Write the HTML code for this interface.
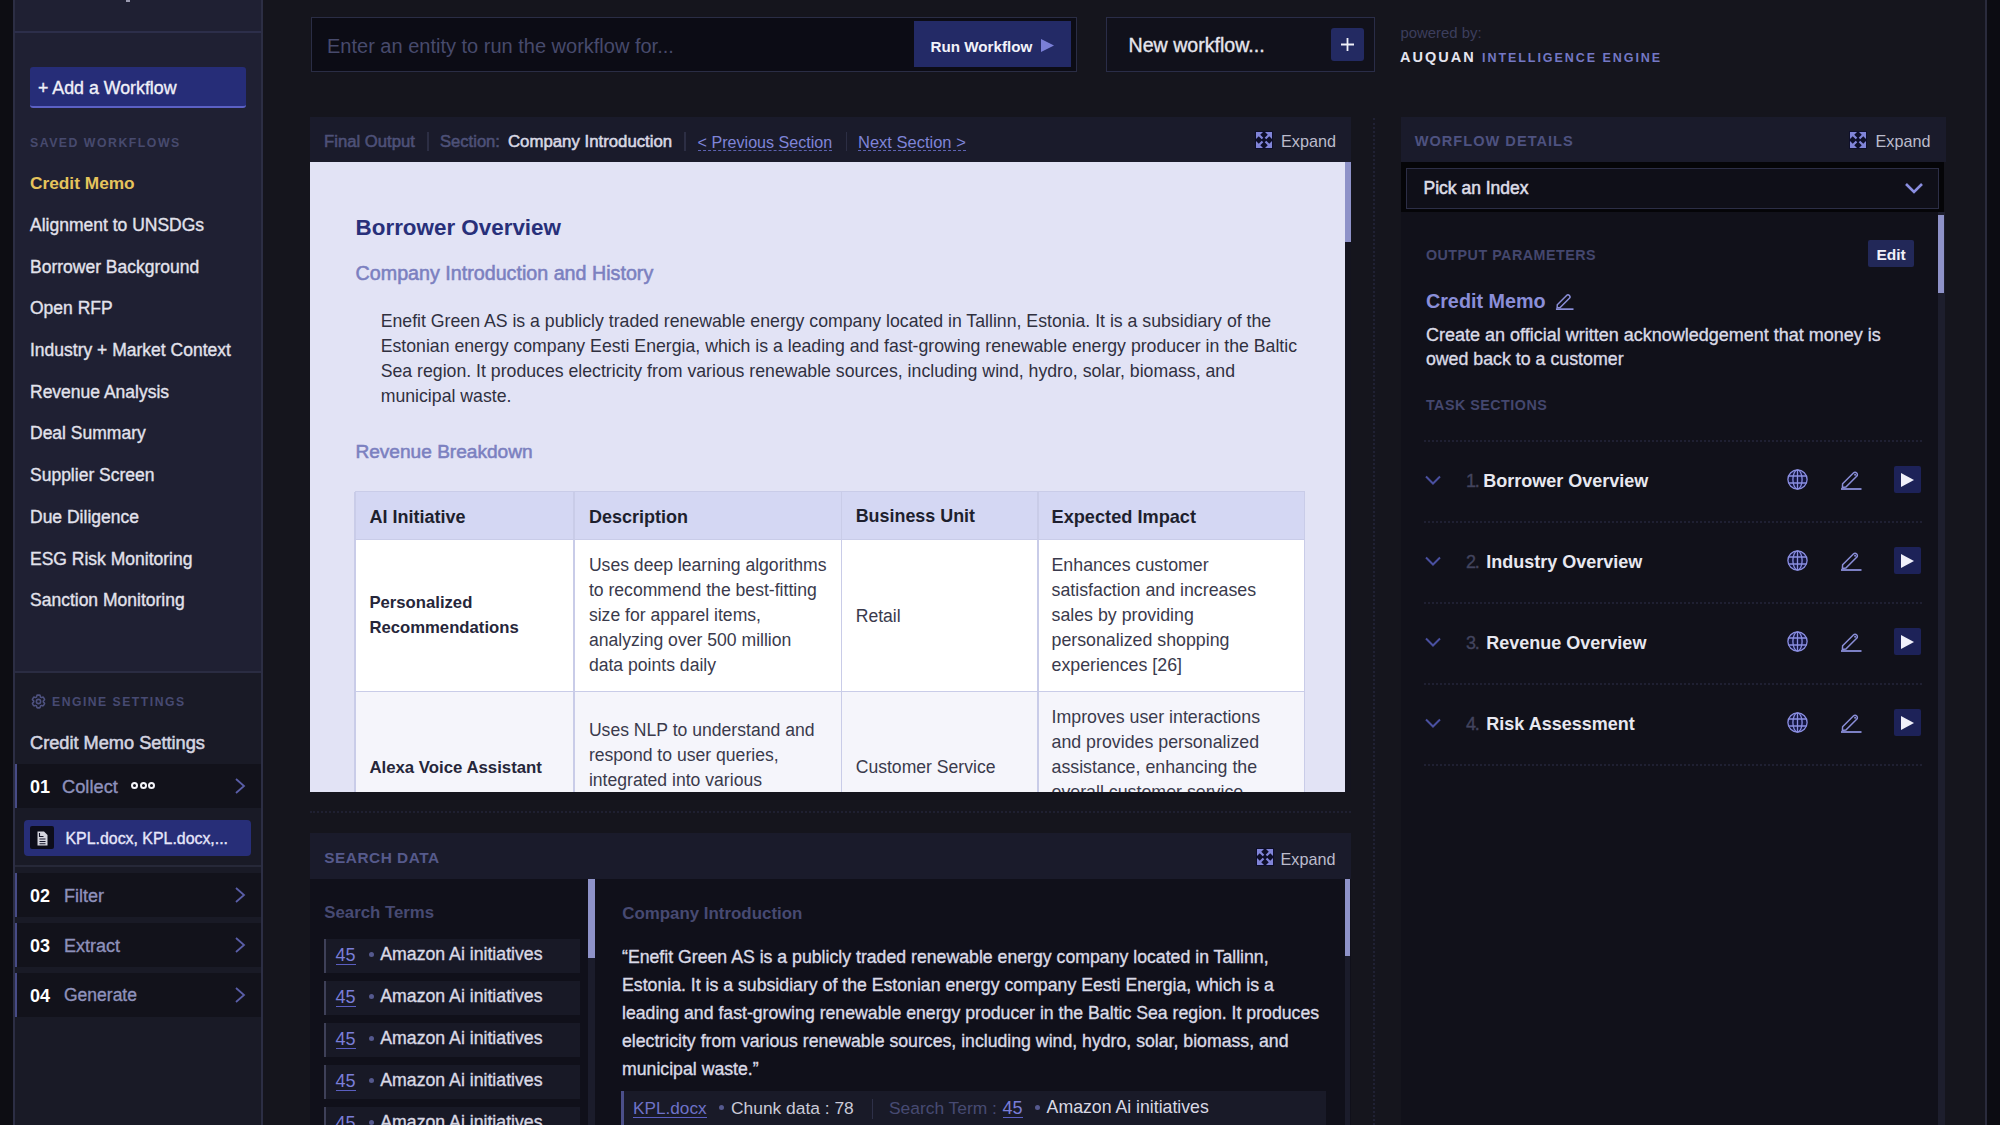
<!DOCTYPE html>
<html><head><meta charset="utf-8"><title>Auquan Workflow</title>
<style>
html,body{margin:0;padding:0;}
body{width:2000px;height:1125px;overflow:hidden;background:#15151d;font-family:"Liberation Sans",sans-serif;position:relative;}
.t{position:absolute;white-space:nowrap;}
.m{-webkit-text-stroke:0.35px currentColor;}
.m2{-webkit-text-stroke:0.55px currentColor;}
.r{position:absolute;}
svg.r{display:block;}
</style></head><body>
<div id="sidebar">
<div class="r" style="left:0px;top:0px;width:13px;height:1125px;background:#0d0d13;"></div>
<div class="r" style="left:13px;top:0px;width:250px;height:1125px;background:#1f2033;"></div>
<div class="r" style="left:13px;top:0px;width:1.5px;height:1125px;background:#2c2e44;"></div>
<div class="r" style="left:261px;top:0px;width:2px;height:1125px;background:#2c2e44;"></div>
<div class="r" style="left:14px;top:31px;width:247px;height:2px;background:#2c2e4a;"></div>
<div class="r" style="left:126px;top:0px;width:4px;height:1.5px;background:#9a9ab0;"></div>
<div class="r" style="left:30px;top:67px;width:216px;height:41px;background:#262d78;border-radius:3px;border-bottom:2px solid #5b60c4;box-sizing:border-box;"></div>
<div class="t m" style="left:38px;top:79.73px;font-size:17.8px;color:#f0f0f8;font-weight:400;letter-spacing:0px;line-height:1;">+ Add a Workflow</div>
<div class="t" style="left:30px;top:136.89px;font-size:12.3px;color:#474a6e;font-weight:700;letter-spacing:1.5px;line-height:1;">SAVED WORKFLOWS</div>
<div class="t" style="left:30px;top:175.16px;font-size:17.3px;color:#e6c45c;font-weight:700;letter-spacing:0px;line-height:1;">Credit Memo</div>
<div class="t m" style="left:30px;top:216.99px;font-size:17.5px;color:#e2e2ec;font-weight:400;letter-spacing:0px;line-height:1;">Alignment to UNSDGs</div>
<div class="t m" style="left:30px;top:258.69px;font-size:17.5px;color:#e2e2ec;font-weight:400;letter-spacing:0px;line-height:1;">Borrower Background</div>
<div class="t m" style="left:30px;top:300.39px;font-size:17.5px;color:#e2e2ec;font-weight:400;letter-spacing:0px;line-height:1;">Open RFP</div>
<div class="t m" style="left:30px;top:342.09px;font-size:17.5px;color:#e2e2ec;font-weight:400;letter-spacing:0px;line-height:1;">Industry + Market Context</div>
<div class="t m" style="left:30px;top:383.79px;font-size:17.5px;color:#e2e2ec;font-weight:400;letter-spacing:0px;line-height:1;">Revenue Analysis</div>
<div class="t m" style="left:30px;top:425.49px;font-size:17.5px;color:#e2e2ec;font-weight:400;letter-spacing:0px;line-height:1;">Deal Summary</div>
<div class="t m" style="left:30px;top:467.19px;font-size:17.5px;color:#e2e2ec;font-weight:400;letter-spacing:0px;line-height:1;">Supplier Screen</div>
<div class="t m" style="left:30px;top:508.89px;font-size:17.5px;color:#e2e2ec;font-weight:400;letter-spacing:0px;line-height:1;">Due Diligence</div>
<div class="t m" style="left:30px;top:550.59px;font-size:17.5px;color:#e2e2ec;font-weight:400;letter-spacing:0px;line-height:1;">ESG Risk Monitoring</div>
<div class="t m" style="left:30px;top:592.29px;font-size:17.5px;color:#e2e2ec;font-weight:400;letter-spacing:0px;line-height:1;">Sanction Monitoring</div>
<div class="r" style="left:14.5px;top:672px;width:246.5px;height:453px;background:#191a26;"></div>
<div class="r" style="left:14.5px;top:671px;width:246.5px;height:2px;background:#2a2c42;"></div>
<svg class="r" style="left:29.5px;top:692.5px" width="17" height="17" viewBox="0 0 24 24" fill="none" stroke="#4e5280" stroke-width="2.2"><path d="M9.594 3.94c.09-.542.56-.94 1.11-.94h2.593c.55 0 1.02.398 1.11.94l.213 1.281c.063.374.313.686.645.87.074.04.147.083.22.127.325.196.72.257 1.075.124l1.217-.456a1.125 1.125 0 0 1 1.37.49l1.296 2.247a1.125 1.125 0 0 1-.26 1.431l-1.003.827c-.293.241-.438.613-.43.992a7.723 7.723 0 0 1 0 .255c-.008.378.137.75.43.991l1.004.827c.424.35.534.955.26 1.43l-1.298 2.247a1.125 1.125 0 0 1-1.369.491l-1.217-.456c-.355-.133-.75-.072-1.076.124a6.47 6.47 0 0 1-.22.128c-.331.183-.581.495-.644.869l-.213 1.281c-.09.543-.56.94-1.11.94h-2.594c-.55 0-1.019-.398-1.11-.94l-.213-1.281c-.062-.374-.312-.686-.644-.87a6.52 6.52 0 0 1-.22-.127c-.325-.196-.72-.257-1.076-.124l-1.217.456a1.125 1.125 0 0 1-1.369-.49l-1.297-2.247a1.125 1.125 0 0 1 .26-1.431l1.004-.827c.292-.24.437-.613.43-.991a6.932 6.932 0 0 1 0-.255c.007-.38-.138-.751-.43-.992l-1.004-.827a1.125 1.125 0 0 1-.26-1.43l1.297-2.247a1.125 1.125 0 0 1 1.37-.491l1.216.456c.356.133.751.072 1.076-.124.072-.044.146-.086.22-.128.332-.183.582-.495.644-.869l.214-1.28Z"/><circle cx="12" cy="12" r="3"/></svg>
<div class="t" style="left:52px;top:696.47px;font-size:12.2px;color:#474a72;font-weight:700;letter-spacing:1.5px;line-height:1;">ENGINE SETTINGS</div>
<div class="t m2" style="left:30px;top:734.39px;font-size:18.2px;color:#d4d4e0;font-weight:400;letter-spacing:0px;line-height:1;">Credit Memo Settings</div>
<div class="r" style="left:14.5px;top:764px;width:246.5px;height:44px;background:#12121b;"></div>
<div class="r" style="left:14.5px;top:764px;width:2.5px;height:44px;background:#474b86;"></div>
<div class="t" style="left:30px;top:777.86px;font-size:18px;color:#ffffff;font-weight:700;letter-spacing:0px;line-height:1;">01</div>
<div class="t m" style="left:62px;top:777.61px;font-size:18.3px;color:#8e91bc;font-weight:400;letter-spacing:0px;line-height:1;">Collect</div>
<svg class="r" style="left:234px;top:777.0px" width="12" height="18" viewBox="0 0 12 18" fill="none" stroke="#5a5ea8" stroke-width="1.8"><path d="M2 2l8 7-8 7"/></svg>
<div class="r" style="left:131.0px;top:782px;width:7px;height:7px;border:2px solid #f4f4fa;border-radius:50%;box-sizing:border-box"></div>
<div class="r" style="left:139.5px;top:782px;width:7px;height:7px;border:2px solid #f4f4fa;border-radius:50%;box-sizing:border-box"></div>
<div class="r" style="left:148.0px;top:782px;width:7px;height:7px;border:2px solid #f4f4fa;border-radius:50%;box-sizing:border-box"></div>
<div class="r" style="left:24px;top:820px;width:227px;height:36px;background:#272e78;border-radius:4px"></div>
<div class="r" style="left:30px;top:826px;width:24px;height:23px;background:#0d0d1a;border-radius:2px"></div>
<svg class="r" style="left:36.5px;top:831px" width="11" height="15" viewBox="0 0 11 15"><path d="M0.5 0.5h6.5l3.5 3.5v10.5h-10z" fill="#d4d4de"/><path d="M2.5 2v3.5h4M2.5 8h6M2.5 10.5h6M2.5 12.8h6" stroke="#15152a" stroke-width="1.1" fill="none"/></svg>
<div class="t m" style="left:65.5px;top:830.94px;font-size:15.9px;color:#e6e6fa;font-weight:400;letter-spacing:0px;line-height:1;">KPL.docx, KPL.docx,...</div>
<div class="r" style="left:14.5px;top:865px;width:246.5px;height:2px;background:#262838;"></div>
<div class="r" style="left:14.5px;top:873px;width:246.5px;height:44px;background:#12121b;"></div>
<div class="r" style="left:14.5px;top:873px;width:2.5px;height:44px;background:#474b86;"></div>
<div class="t" style="left:30px;top:886.86px;font-size:18px;color:#ffffff;font-weight:700;letter-spacing:0px;line-height:1;">02</div>
<div class="t m" style="left:64px;top:886.86px;font-size:18.0px;color:#8e91bc;font-weight:400;letter-spacing:0px;line-height:1;">Filter</div>
<svg class="r" style="left:234px;top:886.0px" width="12" height="18" viewBox="0 0 12 18" fill="none" stroke="#5a5ea8" stroke-width="1.8"><path d="M2 2l8 7-8 7"/></svg>
<div class="r" style="left:14.5px;top:923px;width:246.5px;height:44px;background:#12121b;"></div>
<div class="r" style="left:14.5px;top:923px;width:2.5px;height:44px;background:#474b86;"></div>
<div class="t" style="left:30px;top:936.86px;font-size:18px;color:#ffffff;font-weight:700;letter-spacing:0px;line-height:1;">03</div>
<div class="t m" style="left:64px;top:936.86px;font-size:18.0px;color:#8e91bc;font-weight:400;letter-spacing:0px;line-height:1;">Extract</div>
<svg class="r" style="left:234px;top:936.0px" width="12" height="18" viewBox="0 0 12 18" fill="none" stroke="#5a5ea8" stroke-width="1.8"><path d="M2 2l8 7-8 7"/></svg>
<div class="r" style="left:14.5px;top:973px;width:246.5px;height:44px;background:#12121b;"></div>
<div class="r" style="left:14.5px;top:973px;width:2.5px;height:44px;background:#474b86;"></div>
<div class="t" style="left:30px;top:986.86px;font-size:18px;color:#ffffff;font-weight:700;letter-spacing:0px;line-height:1;">04</div>
<div class="t m" style="left:64px;top:987.29px;font-size:17.5px;color:#8e91bc;font-weight:400;letter-spacing:0px;line-height:1;">Generate</div>
<svg class="r" style="left:234px;top:986.0px" width="12" height="18" viewBox="0 0 12 18" fill="none" stroke="#5a5ea8" stroke-width="1.8"><path d="M2 2l8 7-8 7"/></svg>
</div>
<div id="main">
<div class="r" style="left:311px;top:17px;width:766px;height:55px;background:#0c0c15;border:1.5px solid #2a2d45;box-sizing:border-box;"></div>
<div class="t" style="left:327px;top:36.27px;font-size:20px;color:#474a6c;font-weight:400;letter-spacing:0px;line-height:1;">Enter an entity to run the workflow for...</div>
<div class="r" style="left:914px;top:21px;width:157px;height:46px;background:#232a66;"></div>
<div class="t" style="left:930.5px;top:38.93px;font-size:15.2px;color:#f2f2fa;font-weight:700;letter-spacing:0px;line-height:1;">Run Workflow</div>
<svg class="r" style="left:1041px;top:39px" width="13" height="13" viewBox="0 0 13 13"><path d="M0 0L13 6.5L0 13z" fill="#7a7fd8"/></svg>
<div class="r" style="left:1106px;top:17px;width:269px;height:55px;background:#11111b;border:1.5px solid #2a2d48;box-sizing:border-box;"></div>
<div class="t m" style="left:1128.5px;top:36.01px;font-size:19.6px;color:#e6e6ee;font-weight:400;letter-spacing:0px;line-height:1;">New workflow...</div>
<div class="r" style="left:1331px;top:28px;width:33px;height:33px;background:#232a62;border-radius:3px"></div>
<svg class="r" style="left:1340px;top:37px" width="15" height="15" viewBox="0 0 15 15" stroke="#f0f0f8" stroke-width="1.8"><path d="M7.5 1v13M1 7.5h13"/></svg>
<div class="t" style="left:1400.5px;top:26.39px;font-size:14.9px;color:#3c3e5c;font-weight:400;letter-spacing:0px;line-height:1;">powered by:</div>
<div class="t" style="left:1400px;top:50.03px;font-size:14.5px;color:#e4e4ee;font-weight:700;letter-spacing:2.0px;line-height:1;">AUQUAN</div>
<div class="t" style="left:1482px;top:51.72px;font-size:12.5px;color:#7478c4;font-weight:700;letter-spacing:1.95px;line-height:1;">INTELLIGENCE ENGINE</div>
<div class="r" style="left:310px;top:117px;width:1041px;height:45px;background:#1a1b2b;"></div>
<div class="t m2" style="left:324px;top:133.66px;font-size:16.7px;color:#4e5178;font-weight:400;letter-spacing:0px;line-height:1;">Final Output</div>
<div class="r" style="left:427px;top:132px;width:1.5px;height:19px;background:#2c2e44;"></div>
<div class="t m2" style="left:440px;top:133.75px;font-size:16.6px;color:#4e5178;font-weight:400;letter-spacing:0px;line-height:1;">Section:</div>
<div class="t m2" style="left:508px;top:133.58px;font-size:16.8px;color:#d8d8e4;font-weight:400;letter-spacing:0px;line-height:1;">Company Introduction</div>
<div class="r" style="left:684px;top:132px;width:1.5px;height:19px;background:#2c2e44;"></div>
<div class="t" style="left:697.6px;top:134.17px;font-size:16.1px;color:#7f84d8;font-weight:400;letter-spacing:0px;line-height:1;border-bottom:1.5px dashed #5d62b0;padding-bottom:0px;">&lt; Previous Section</div>
<div class="r" style="left:845.5px;top:132px;width:1.5px;height:19px;background:#2c2e44;"></div>
<div class="t" style="left:858px;top:133.83px;font-size:16.5px;color:#7f84d8;font-weight:400;letter-spacing:0px;line-height:1;border-bottom:1.5px dashed #5d62b0;">Next Section &gt;</div>
<svg class="r" style="left:1255px;top:131px" width="18" height="18" viewBox="0 0 18 18"><rect width="18" height="18" fill="#0e0f2a"/><g fill="#8084d8"><path d="M1 1h7L1 8z"/><path d="M17 1h-7l7 7z"/><path d="M1 17h7L1 10z"/><path d="M17 17h-7l7-7z"/></g><g stroke="#8084d8" stroke-width="2.2"><path d="M3 3l4.5 4.5M15 3l-4.5 4.5M3 15l4.5-4.5M15 15l-4.5-4.5"/></g></svg>
<div class="t" style="left:1281px;top:133.39px;font-size:16.2px;color:#bcbccc;font-weight:400;letter-spacing:0px;line-height:1;">Expand</div>
<div class="r" style="left:310px;top:162px;width:1035px;height:630px;background:#e2e3f5;"></div>
<div class="r" style="left:0;top:0;width:1351px;height:792px;overflow:hidden">
<div class="r" style="left:1345px;top:162px;width:6px;height:630px;background:#14141f;"></div>
<div class="r" style="left:1345px;top:162px;width:6px;height:80px;background:#8e92c8;"></div>
<div class="t" style="left:355.6px;top:217.44px;font-size:22.4px;color:#28307a;font-weight:700;letter-spacing:0px;line-height:1;">Borrower Overview</div>
<div class="t m2" style="left:355.6px;top:264.12px;font-size:19.7px;color:#7b80c0;font-weight:400;letter-spacing:0px;line-height:1;">Company Introduction and History</div>
<div class="t" style="left:380.7px;top:312.82px;font-size:17.7px;color:#30303f;font-weight:400;letter-spacing:0px;line-height:1;">Enefit Green AS is a publicly traded renewable energy company located in Tallinn, Estonia. It is a subsidiary of the</div>
<div class="t" style="left:380.7px;top:338.02px;font-size:17.7px;color:#30303f;font-weight:400;letter-spacing:0px;line-height:1;">Estonian energy company Eesti Energia, which is a leading and fast-growing renewable energy producer in the Baltic</div>
<div class="t" style="left:380.7px;top:363.22px;font-size:17.7px;color:#30303f;font-weight:400;letter-spacing:0px;line-height:1;">Sea region. It produces electricity from various renewable sources, including wind, hydro, solar, biomass, and</div>
<div class="t" style="left:380.7px;top:388.42px;font-size:17.7px;color:#30303f;font-weight:400;letter-spacing:0px;line-height:1;">municipal waste.</div>
<div class="t m2" style="left:355.4px;top:442.03px;font-size:19.1px;color:#7b80c0;font-weight:400;letter-spacing:0px;line-height:1;">Revenue Breakdown</div>
<div class="r" style="left:355px;top:491.5px;width:950px;height:48px;background:#d4d7f3;"></div>
<div class="r" style="left:355px;top:539.5px;width:950px;height:152px;background:#ffffff;"></div>
<div class="r" style="left:355px;top:691.5px;width:950px;height:101px;background:#f5f5fb;"></div>
<div class="r" style="left:354.25px;top:491.5px;width:1.5px;height:301px;background:#c9cce8;"></div>
<div class="r" style="left:573.25px;top:491.5px;width:1.5px;height:301px;background:#c9cce8;"></div>
<div class="r" style="left:840.75px;top:491.5px;width:1.5px;height:301px;background:#c9cce8;"></div>
<div class="r" style="left:1037.25px;top:491.5px;width:1.5px;height:301px;background:#c9cce8;"></div>
<div class="r" style="left:1303.75px;top:491.5px;width:1.5px;height:301px;background:#c9cce8;"></div>
<div class="r" style="left:355px;top:490.75px;width:950px;height:1.5px;background:#c9cce8;"></div>
<div class="r" style="left:355px;top:538.75px;width:950px;height:1.5px;background:#c9cce8;"></div>
<div class="r" style="left:355px;top:690.75px;width:950px;height:1.5px;background:#c9cce8;"></div>
<div class="t" style="left:369.4px;top:508.16px;font-size:18.0px;color:#1e1f2e;font-weight:700;letter-spacing:0px;line-height:1;">AI Initiative</div>
<div class="t" style="left:588.9px;top:508.16px;font-size:18.0px;color:#1e1f2e;font-weight:700;letter-spacing:0px;line-height:1;">Description</div>
<div class="t" style="left:855.7px;top:508.25px;font-size:17.9px;color:#1e1f2e;font-weight:700;letter-spacing:0px;line-height:1;">Business Unit</div>
<div class="t" style="left:1051.5px;top:507.99px;font-size:18.2px;color:#1e1f2e;font-weight:700;letter-spacing:0px;line-height:1;">Expected Impact</div>
<div class="t" style="left:369.4px;top:595.36px;font-size:16.7px;color:#26263a;font-weight:700;letter-spacing:0px;line-height:1;">Personalized</div>
<div class="t" style="left:369.4px;top:620.26px;font-size:16.7px;color:#26263a;font-weight:700;letter-spacing:0px;line-height:1;">Recommendations</div>
<div class="t" style="left:588.9px;top:557.40px;font-size:17.6px;color:#3a3a4c;font-weight:400;letter-spacing:0px;line-height:1;">Uses deep learning algorithms</div>
<div class="t" style="left:588.9px;top:582.40px;font-size:17.6px;color:#3a3a4c;font-weight:400;letter-spacing:0px;line-height:1;">to recommend the best-fitting</div>
<div class="t" style="left:588.9px;top:607.40px;font-size:17.6px;color:#3a3a4c;font-weight:400;letter-spacing:0px;line-height:1;">size for apparel items,</div>
<div class="t" style="left:588.9px;top:632.40px;font-size:17.6px;color:#3a3a4c;font-weight:400;letter-spacing:0px;line-height:1;">analyzing over 500 million</div>
<div class="t" style="left:588.9px;top:657.40px;font-size:17.6px;color:#3a3a4c;font-weight:400;letter-spacing:0px;line-height:1;">data points daily</div>
<div class="t" style="left:855.7px;top:607.90px;font-size:17.6px;color:#3a3a4c;font-weight:400;letter-spacing:0px;line-height:1;">Retail</div>
<div class="t" style="left:1051.5px;top:557.23px;font-size:17.8px;color:#3a3a4c;font-weight:400;letter-spacing:0px;line-height:1;">Enhances customer</div>
<div class="t" style="left:1051.5px;top:582.23px;font-size:17.8px;color:#3a3a4c;font-weight:400;letter-spacing:0px;line-height:1;">satisfaction and increases</div>
<div class="t" style="left:1051.5px;top:607.23px;font-size:17.8px;color:#3a3a4c;font-weight:400;letter-spacing:0px;line-height:1;">sales by providing</div>
<div class="t" style="left:1051.5px;top:632.23px;font-size:17.8px;color:#3a3a4c;font-weight:400;letter-spacing:0px;line-height:1;">personalized shopping</div>
<div class="t" style="left:1051.5px;top:657.23px;font-size:17.8px;color:#3a3a4c;font-weight:400;letter-spacing:0px;line-height:1;">experiences [26]</div>
<div class="t" style="left:369.4px;top:759.98px;font-size:16.8px;color:#26263a;font-weight:700;letter-spacing:0px;line-height:1;">Alexa Voice Assistant</div>
<div class="t" style="left:588.9px;top:722.40px;font-size:17.6px;color:#3a3a4c;font-weight:400;letter-spacing:0px;line-height:1;">Uses NLP to understand and</div>
<div class="t" style="left:588.9px;top:747.40px;font-size:17.6px;color:#3a3a4c;font-weight:400;letter-spacing:0px;line-height:1;">respond to user queries,</div>
<div class="t" style="left:588.9px;top:772.40px;font-size:17.6px;color:#3a3a4c;font-weight:400;letter-spacing:0px;line-height:1;">integrated into various</div>
<div class="t" style="left:855.7px;top:759.30px;font-size:17.6px;color:#3a3a4c;font-weight:400;letter-spacing:0px;line-height:1;">Customer Service</div>
<div class="t" style="left:1051.5px;top:709.23px;font-size:17.8px;color:#3a3a4c;font-weight:400;letter-spacing:0px;line-height:1;">Improves user interactions</div>
<div class="t" style="left:1051.5px;top:734.23px;font-size:17.8px;color:#3a3a4c;font-weight:400;letter-spacing:0px;line-height:1;">and provides personalized</div>
<div class="t" style="left:1051.5px;top:759.23px;font-size:17.8px;color:#3a3a4c;font-weight:400;letter-spacing:0px;line-height:1;">assistance, enhancing the</div>
<div class="t" style="left:1051.5px;top:784.23px;font-size:17.8px;color:#3a3a4c;font-weight:400;letter-spacing:0px;line-height:1;">overall customer service</div>
</div>
</div>
<div id="right">
<div class="r" style="left:310px;top:811px;width:1041px;height:0px;background:transparent;border-top:2px dotted #1f2031;"></div>
<div class="r" style="left:1373px;top:118px;width:0px;height:1007px;background:transparent;border-left:2px dotted #202134;"></div>
<div class="r" style="left:310px;top:832.5px;width:1041px;height:46.5px;background:#1a1b2b;"></div>
<div class="t" style="left:324.3px;top:850.16px;font-size:15.4px;color:#565a8c;font-weight:700;letter-spacing:0.5px;line-height:1;">SEARCH DATA</div>
<svg class="r" style="left:1255.5px;top:848px" width="18" height="18" viewBox="0 0 18 18"><rect width="18" height="18" fill="#0e0f2a"/><g fill="#8084d8"><path d="M1 1h7L1 8z"/><path d="M17 1h-7l7 7z"/><path d="M1 17h7L1 10z"/><path d="M17 17h-7l7-7z"/></g><g stroke="#8084d8" stroke-width="2.2"><path d="M3 3l4.5 4.5M15 3l-4.5 4.5M3 15l4.5-4.5M15 15l-4.5-4.5"/></g></svg>
<div class="t" style="left:1280.5px;top:850.59px;font-size:16.2px;color:#bcbccc;font-weight:400;letter-spacing:0px;line-height:1;">Expand</div>
<div class="r" style="left:310px;top:879px;width:1041px;height:246px;background:#10101a;"></div>
<div class="r" style="left:588px;top:879px;width:7px;height:246px;background:#1b1c2b;"></div>
<div class="r" style="left:588px;top:879px;width:7px;height:79px;background:#8e92c8;"></div>
<div class="r" style="left:1344.5px;top:879px;width:5.5px;height:246px;background:#1b1c2b;"></div>
<div class="r" style="left:1344.5px;top:879px;width:5.5px;height:77px;background:#8e92c8;"></div>
<div class="t" style="left:324.3px;top:905.38px;font-size:16.8px;color:#474a72;font-weight:700;letter-spacing:0px;line-height:1;">Search Terms</div>
<div class="r" style="left:324px;top:938.5px;width:256px;height:34px;background:#181926;"></div>
<div class="r" style="left:324px;top:938.5px;width:2px;height:34px;background:#3e4058;"></div>
<div class="t" style="left:335.5px;top:945.76px;font-size:18px;color:#7a7ed8;font-weight:400;letter-spacing:0px;line-height:1;border-bottom:1.5px solid #5a5ec0;">45</div>
<div class="r" style="left:368.5px;top:952.0px;width:5px;height:5px;background:#55598e;border-radius:50%"></div>
<div class="t m" style="left:380.3px;top:946.02px;font-size:17.7px;color:#d8d8e4;font-weight:400;letter-spacing:0px;line-height:1;">Amazon Ai initiatives</div>
<div class="r" style="left:324px;top:980.5px;width:256px;height:34px;background:#181926;"></div>
<div class="r" style="left:324px;top:980.5px;width:2px;height:34px;background:#3e4058;"></div>
<div class="t" style="left:335.5px;top:987.76px;font-size:18px;color:#7a7ed8;font-weight:400;letter-spacing:0px;line-height:1;border-bottom:1.5px solid #5a5ec0;">45</div>
<div class="r" style="left:368.5px;top:994.0px;width:5px;height:5px;background:#55598e;border-radius:50%"></div>
<div class="t m" style="left:380.3px;top:988.02px;font-size:17.7px;color:#d8d8e4;font-weight:400;letter-spacing:0px;line-height:1;">Amazon Ai initiatives</div>
<div class="r" style="left:324px;top:1022.5px;width:256px;height:34px;background:#181926;"></div>
<div class="r" style="left:324px;top:1022.5px;width:2px;height:34px;background:#3e4058;"></div>
<div class="t" style="left:335.5px;top:1029.76px;font-size:18px;color:#7a7ed8;font-weight:400;letter-spacing:0px;line-height:1;border-bottom:1.5px solid #5a5ec0;">45</div>
<div class="r" style="left:368.5px;top:1036.0px;width:5px;height:5px;background:#55598e;border-radius:50%"></div>
<div class="t m" style="left:380.3px;top:1030.02px;font-size:17.7px;color:#d8d8e4;font-weight:400;letter-spacing:0px;line-height:1;">Amazon Ai initiatives</div>
<div class="r" style="left:324px;top:1064.5px;width:256px;height:34px;background:#181926;"></div>
<div class="r" style="left:324px;top:1064.5px;width:2px;height:34px;background:#3e4058;"></div>
<div class="t" style="left:335.5px;top:1071.76px;font-size:18px;color:#7a7ed8;font-weight:400;letter-spacing:0px;line-height:1;border-bottom:1.5px solid #5a5ec0;">45</div>
<div class="r" style="left:368.5px;top:1078.0px;width:5px;height:5px;background:#55598e;border-radius:50%"></div>
<div class="t m" style="left:380.3px;top:1072.02px;font-size:17.7px;color:#d8d8e4;font-weight:400;letter-spacing:0px;line-height:1;">Amazon Ai initiatives</div>
<div class="r" style="left:324px;top:1106.5px;width:256px;height:34px;background:#181926;"></div>
<div class="r" style="left:324px;top:1106.5px;width:2px;height:34px;background:#3e4058;"></div>
<div class="t" style="left:335.5px;top:1113.76px;font-size:18px;color:#7a7ed8;font-weight:400;letter-spacing:0px;line-height:1;border-bottom:1.5px solid #5a5ec0;">45</div>
<div class="r" style="left:368.5px;top:1120.0px;width:5px;height:5px;background:#55598e;border-radius:50%"></div>
<div class="t m" style="left:380.3px;top:1114.02px;font-size:17.7px;color:#d8d8e4;font-weight:400;letter-spacing:0px;line-height:1;">Amazon Ai initiatives</div>
<div class="t" style="left:622.2px;top:905.89px;font-size:16.9px;color:#474a72;font-weight:700;letter-spacing:0px;line-height:1;">Company Introduction</div>
<div class="t m" style="left:622px;top:949.22px;font-size:17.7px;color:#dadae6;font-weight:400;letter-spacing:0px;line-height:1;">“Enefit Green AS is a publicly traded renewable energy company located in Tallinn,</div>
<div class="t m" style="left:622px;top:977.12px;font-size:17.7px;color:#dadae6;font-weight:400;letter-spacing:0px;line-height:1;">Estonia. It is a subsidiary of the Estonian energy company Eesti Energia, which is a</div>
<div class="t m" style="left:622px;top:1005.02px;font-size:17.7px;color:#dadae6;font-weight:400;letter-spacing:0px;line-height:1;">leading and fast-growing renewable energy producer in the Baltic Sea region. It produces</div>
<div class="t m" style="left:622px;top:1032.92px;font-size:17.7px;color:#dadae6;font-weight:400;letter-spacing:0px;line-height:1;">electricity from various renewable sources, including wind, hydro, solar, biomass, and</div>
<div class="t m" style="left:622px;top:1060.82px;font-size:17.7px;color:#dadae6;font-weight:400;letter-spacing:0px;line-height:1;">municipal waste.”</div>
<div class="r" style="left:621px;top:1091px;width:705px;height:34px;background:#191a28;"></div>
<div class="r" style="left:621px;top:1091px;width:3px;height:34px;background:#4b4f8a;"></div>
<div class="t" style="left:633px;top:1099.84px;font-size:17.2px;color:#6e72c8;font-weight:400;letter-spacing:0px;line-height:1;border-bottom:1.5px solid #5a5ec0;">KPL.docx</div>
<div class="r" style="left:718.5px;top:1104.5px;width:5px;height:5px;background:#55598e;border-radius:50%"></div>
<div class="t" style="left:731px;top:1099.67px;font-size:17.4px;color:#cacad8;font-weight:400;letter-spacing:0px;line-height:1;">Chunk data : 78</div>
<div class="r" style="left:871.5px;top:1099px;width:1.5px;height:20px;background:#2e3048;"></div>
<div class="t" style="left:889px;top:1099.67px;font-size:17.4px;color:#474a72;font-weight:400;letter-spacing:0px;line-height:1;">Search Term :</div>
<div class="t" style="left:1002.6px;top:1099.16px;font-size:18px;color:#7a7ed8;font-weight:400;letter-spacing:0px;line-height:1;border-bottom:1.5px solid #5a5ec0;">45</div>
<div class="r" style="left:1034.5px;top:1104.5px;width:5px;height:5px;background:#55598e;border-radius:50%"></div>
<div class="t" style="left:1046.6px;top:1099.42px;font-size:17.7px;color:#d8d8e4;font-weight:400;letter-spacing:0px;line-height:1;">Amazon Ai initiatives</div>
<div class="r" style="left:1401px;top:117px;width:545px;height:45px;background:#1a1b2b;"></div>
<div class="t" style="left:1414.7px;top:134.34px;font-size:14.6px;color:#4e5280;font-weight:700;letter-spacing:1.0px;line-height:1;">WORFLOW DETAILS</div>
<svg class="r" style="left:1849px;top:131px" width="18" height="18" viewBox="0 0 18 18"><rect width="18" height="18" fill="#0e0f2a"/><g fill="#8084d8"><path d="M1 1h7L1 8z"/><path d="M17 1h-7l7 7z"/><path d="M1 17h7L1 10z"/><path d="M17 17h-7l7-7z"/></g><g stroke="#8084d8" stroke-width="2.2"><path d="M3 3l4.5 4.5M15 3l-4.5 4.5M3 15l4.5-4.5M15 15l-4.5-4.5"/></g></svg>
<div class="t" style="left:1875.5px;top:133.39px;font-size:16.2px;color:#bcbccc;font-weight:400;letter-spacing:0px;line-height:1;">Expand</div>
<div class="r" style="left:1401px;top:162px;width:543px;height:50px;background:#050508;"></div>
<div class="r" style="left:1406px;top:168px;width:533px;height:41px;background:#0f0f18;border:1.5px solid #2c2e46;box-sizing:border-box;"></div>
<div class="t m2" style="left:1423.5px;top:179.89px;font-size:17.5px;color:#dcdce6;font-weight:400;letter-spacing:0px;line-height:1;">Pick an Index</div>
<svg class="r" style="left:1904px;top:181px" width="20" height="14" viewBox="0 0 20 14" fill="none" stroke="#8a8ee0" stroke-width="2.6"><path d="M2 3l8 8 8-8"/></svg>
<div class="r" style="left:1401px;top:212px;width:537px;height:913px;background:#11111a;"></div>
<div class="r" style="left:1938px;top:212px;width:7px;height:913px;background:#1d1e2d;"></div>
<div class="r" style="left:1938px;top:215px;width:6px;height:78px;background:#8e92c8;"></div>
<div class="t" style="left:1425.9px;top:248.20px;font-size:14.3px;color:#44476e;font-weight:700;letter-spacing:0.5px;line-height:1;">OUTPUT PARAMETERS</div>
<div class="r" style="left:1868px;top:240px;width:46px;height:27px;background:#222858;border-radius:2px"></div>
<div class="t" style="left:1876.5px;top:247.18px;font-size:15.5px;color:#f0f0f8;font-weight:700;letter-spacing:0px;line-height:1;">Edit</div>
<div class="t" style="left:1425.9px;top:292.04px;font-size:19.8px;color:#8a8ed8;font-weight:700;letter-spacing:0px;line-height:1;">Credit Memo</div>
<svg class="r" style="left:1555px;top:292px" width="19" height="18" viewBox="0 0 22 21" fill="none" stroke="#8a8ed8" stroke-width="1.7"><path d="M2.6 14.8L13.4 4a2.3 2.3 0 0 1 3.3 3.3L5.9 18.1 2.4 18.4z"/><path d="M1 20h20.5" stroke-width="2"/></svg>
<div class="t m" style="left:1425.9px;top:326.36px;font-size:18.0px;color:#dadae6;font-weight:400;letter-spacing:0px;line-height:1;">Create an official written acknowledgement that money is</div>
<div class="t m" style="left:1425.9px;top:350.53px;font-size:17.8px;color:#dadae6;font-weight:400;letter-spacing:0px;line-height:1;">owed back to a customer</div>
<div class="t" style="left:1425.9px;top:398.00px;font-size:14.3px;color:#44476e;font-weight:700;letter-spacing:0.5px;line-height:1;">TASK SECTIONS</div>
<div class="r" style="left:1424px;top:440px;width:498px;height:0px;background:transparent;border-top:2px dotted #1f2032;"></div>
<svg class="r" style="left:1424px;top:474.2px" width="18" height="12" viewBox="0 0 18 12" fill="none" stroke="#4a50a0" stroke-width="2"><path d="M2 2.5l7 7 7-7"/></svg>
<div class="t m" style="left:1466px;top:471.76px;font-size:18px;color:#42445e;font-weight:400;letter-spacing:-1.2px;line-height:1;">1.</div>
<div class="t" style="left:1483.3px;top:471.76px;font-size:18px;color:#e8e8f0;font-weight:700;letter-spacing:0px;line-height:1;">Borrower Overview</div>
<svg class="r" style="left:1786.5px;top:469.2px" width="21" height="21" viewBox="0 0 21 21" fill="none" stroke="#8a8ee0" stroke-width="1.3"><circle cx="10.5" cy="10.5" r="9.6" fill="#131540"/><path d="M1.5 7h18M1.5 14h18M10.5 1v19"/><ellipse cx="10.5" cy="10.5" rx="4.6" ry="9.6"/></svg>
<svg class="r" style="left:1840px;top:469.2px" width="22" height="21" viewBox="0 0 22 21" fill="none" stroke="#8a8ed8" stroke-width="1.5"><path d="M2.6 14.8L13.4 4a2.3 2.3 0 0 1 3.3 3.3L5.9 18.1 2.4 18.4z"/><circle cx="15.1" cy="5.7" r="1" fill="#8a8ed8" stroke="none"/><path d="M1 20h20.5" stroke-width="1.8"/></svg>
<div class="r" style="left:1894px;top:466.2px;width:27px;height:27px;background:#1d2258;border-radius:2px"></div>
<svg class="r" style="left:1901px;top:472.7px" width="13" height="14" viewBox="0 0 13 14"><path d="M0 0L13 7L0 14z" fill="#f0f0fa"/></svg>
<div class="r" style="left:1424px;top:521px;width:498px;height:0px;background:transparent;border-top:2px dotted #1f2032;"></div>
<svg class="r" style="left:1424px;top:555.2px" width="18" height="12" viewBox="0 0 18 12" fill="none" stroke="#4a50a0" stroke-width="2"><path d="M2 2.5l7 7 7-7"/></svg>
<div class="t m" style="left:1466px;top:552.76px;font-size:18px;color:#42445e;font-weight:400;letter-spacing:-1.2px;line-height:1;">2.</div>
<div class="t" style="left:1486.3px;top:552.76px;font-size:18px;color:#e8e8f0;font-weight:700;letter-spacing:0px;line-height:1;">Industry Overview</div>
<svg class="r" style="left:1786.5px;top:550.2px" width="21" height="21" viewBox="0 0 21 21" fill="none" stroke="#8a8ee0" stroke-width="1.3"><circle cx="10.5" cy="10.5" r="9.6" fill="#131540"/><path d="M1.5 7h18M1.5 14h18M10.5 1v19"/><ellipse cx="10.5" cy="10.5" rx="4.6" ry="9.6"/></svg>
<svg class="r" style="left:1840px;top:550.2px" width="22" height="21" viewBox="0 0 22 21" fill="none" stroke="#8a8ed8" stroke-width="1.5"><path d="M2.6 14.8L13.4 4a2.3 2.3 0 0 1 3.3 3.3L5.9 18.1 2.4 18.4z"/><circle cx="15.1" cy="5.7" r="1" fill="#8a8ed8" stroke="none"/><path d="M1 20h20.5" stroke-width="1.8"/></svg>
<div class="r" style="left:1894px;top:547.2px;width:27px;height:27px;background:#1d2258;border-radius:2px"></div>
<svg class="r" style="left:1901px;top:553.7px" width="13" height="14" viewBox="0 0 13 14"><path d="M0 0L13 7L0 14z" fill="#f0f0fa"/></svg>
<div class="r" style="left:1424px;top:602px;width:498px;height:0px;background:transparent;border-top:2px dotted #1f2032;"></div>
<svg class="r" style="left:1424px;top:636.2px" width="18" height="12" viewBox="0 0 18 12" fill="none" stroke="#4a50a0" stroke-width="2"><path d="M2 2.5l7 7 7-7"/></svg>
<div class="t m" style="left:1466px;top:633.76px;font-size:18px;color:#42445e;font-weight:400;letter-spacing:-1.2px;line-height:1;">3.</div>
<div class="t" style="left:1486.3px;top:633.76px;font-size:18px;color:#e8e8f0;font-weight:700;letter-spacing:0px;line-height:1;">Revenue Overview</div>
<svg class="r" style="left:1786.5px;top:631.2px" width="21" height="21" viewBox="0 0 21 21" fill="none" stroke="#8a8ee0" stroke-width="1.3"><circle cx="10.5" cy="10.5" r="9.6" fill="#131540"/><path d="M1.5 7h18M1.5 14h18M10.5 1v19"/><ellipse cx="10.5" cy="10.5" rx="4.6" ry="9.6"/></svg>
<svg class="r" style="left:1840px;top:631.2px" width="22" height="21" viewBox="0 0 22 21" fill="none" stroke="#8a8ed8" stroke-width="1.5"><path d="M2.6 14.8L13.4 4a2.3 2.3 0 0 1 3.3 3.3L5.9 18.1 2.4 18.4z"/><circle cx="15.1" cy="5.7" r="1" fill="#8a8ed8" stroke="none"/><path d="M1 20h20.5" stroke-width="1.8"/></svg>
<div class="r" style="left:1894px;top:628.2px;width:27px;height:27px;background:#1d2258;border-radius:2px"></div>
<svg class="r" style="left:1901px;top:634.7px" width="13" height="14" viewBox="0 0 13 14"><path d="M0 0L13 7L0 14z" fill="#f0f0fa"/></svg>
<div class="r" style="left:1424px;top:683px;width:498px;height:0px;background:transparent;border-top:2px dotted #1f2032;"></div>
<svg class="r" style="left:1424px;top:717.2px" width="18" height="12" viewBox="0 0 18 12" fill="none" stroke="#4a50a0" stroke-width="2"><path d="M2 2.5l7 7 7-7"/></svg>
<div class="t m" style="left:1466px;top:714.76px;font-size:18px;color:#42445e;font-weight:400;letter-spacing:-1.2px;line-height:1;">4.</div>
<div class="t" style="left:1486.3px;top:714.76px;font-size:18px;color:#e8e8f0;font-weight:700;letter-spacing:0px;line-height:1;">Risk Assessment</div>
<svg class="r" style="left:1786.5px;top:712.2px" width="21" height="21" viewBox="0 0 21 21" fill="none" stroke="#8a8ee0" stroke-width="1.3"><circle cx="10.5" cy="10.5" r="9.6" fill="#131540"/><path d="M1.5 7h18M1.5 14h18M10.5 1v19"/><ellipse cx="10.5" cy="10.5" rx="4.6" ry="9.6"/></svg>
<svg class="r" style="left:1840px;top:712.2px" width="22" height="21" viewBox="0 0 22 21" fill="none" stroke="#8a8ed8" stroke-width="1.5"><path d="M2.6 14.8L13.4 4a2.3 2.3 0 0 1 3.3 3.3L5.9 18.1 2.4 18.4z"/><circle cx="15.1" cy="5.7" r="1" fill="#8a8ed8" stroke="none"/><path d="M1 20h20.5" stroke-width="1.8"/></svg>
<div class="r" style="left:1894px;top:709.2px;width:27px;height:27px;background:#1d2258;border-radius:2px"></div>
<svg class="r" style="left:1901px;top:715.7px" width="13" height="14" viewBox="0 0 13 14"><path d="M0 0L13 7L0 14z" fill="#f0f0fa"/></svg>
<div class="r" style="left:1424px;top:764px;width:498px;height:0px;background:transparent;border-top:2px dotted #1f2032;"></div>
<div class="r" style="left:1985px;top:0px;width:2px;height:1125px;background:#2a2b3c;"></div>
<div class="r" style="left:1987px;top:0px;width:13px;height:1125px;background:#0c0c12;"></div>
</div>
</body></html>
